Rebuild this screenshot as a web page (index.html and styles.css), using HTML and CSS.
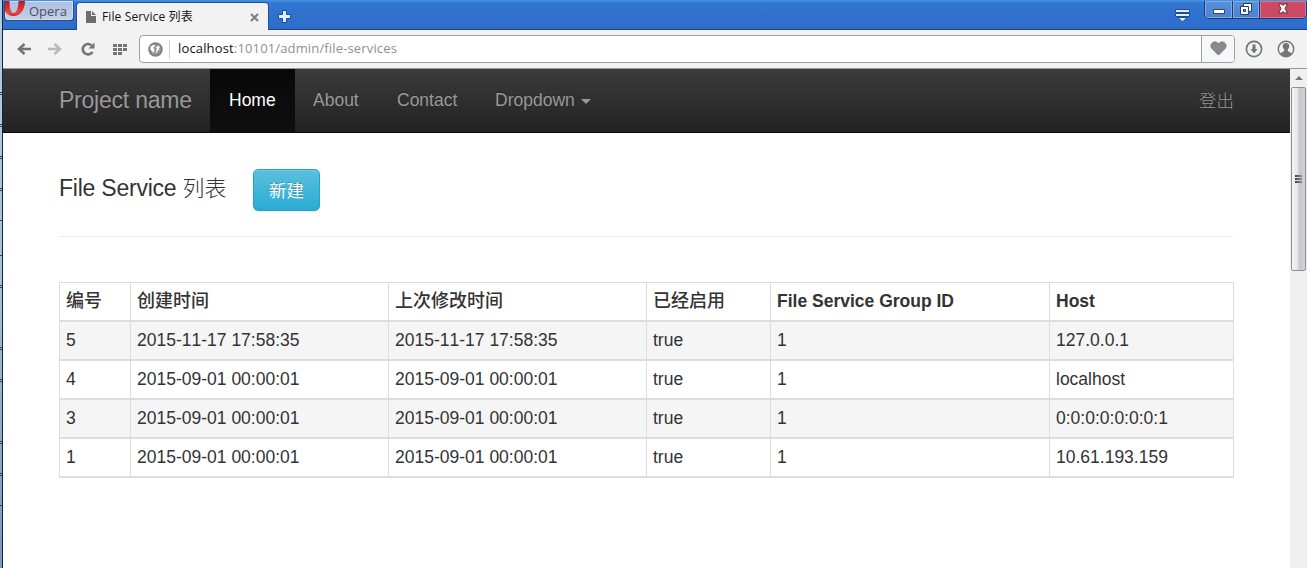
FILE: index.html
```
<!DOCTYPE html>
<html lang="zh-CN">
<head>
<meta charset="utf-8">
<title>File Service 列表</title>
<link rel="stylesheet" href="styles.css">
</head>
<body>
<div class="desktop-edge"><i></i><i></i><i></i><i></i><i class="line"></i><i class="line late"></i><i></i><i class="long"></i><i></i><i class="long"></i><i></i><i class="line"></i></div>
<div class="window">
  <div class="titlebar">
    <div class="opera-button">
      <svg class="opera-logo" width="22" height="18" viewBox="0 0 22 18"><defs><linearGradient id="og" x1="0" y1="0" x2="0" y2="1"><stop offset="0" stop-color="#b81c20"/><stop offset=".8" stop-color="#ef4545"/><stop offset="1" stop-color="#d02020"/></linearGradient></defs><path fill="url(#og)" fill-rule="evenodd" d="M-1 0H22C22 9 17 15 10.500 15C4 15 -1 9 -1 0ZM6.500 0C6.500 8 8 12 10.500 12C13.500 12 15.500 7 15.500 0Z"/></svg>
      <span>Opera</span>
    </div>
    <div class="tab">
      <svg width="12" height="12" viewBox="0 0 12 12"><path fill="#6c6f70" d="M1 0H6V5H11V12H1ZM7 0L11 4H7Z"/></svg>
      <span class="tab-title">File Service 列表</span>
      <svg class="tab-close" width="9" height="9" viewBox="0 0 9 9"><path d="M1 1L8 8M8 1L1 8" stroke="#808080" stroke-width="2.200"/></svg>
    </div>
    <svg class="new-tab" width="13" height="13" viewBox="0 0 13 13"><path d="M4.500 .5H8.500V4.500H12.500V8.500H8.500V12.500H4.500V8.500H.5V4.500H4.500Z" fill="#dff0ff" stroke="#1b4f98"/></svg>
    <svg class="tab-menu" width="15" height="14" viewBox="0 0 15 14"><path d="M.5 .5H14.500V3.500H.5ZM.5 4.500H14.500V7.500H.5ZM3 8.500H12L7.500 13Z" fill="#e3efff" stroke="#1c4e98"/></svg>
    <div class="controls">
      <span class="control minimize"><svg width="12" height="5" viewBox="0 0 12 5"><path d="M.5 .5H11.500V4.500H.5Z" fill="#fff" stroke="#2b4674"/></svg></span>
      <span class="control restore"><svg width="12" height="12" viewBox="0 0 12 12"><path d="M3.500 .5H11.500V8.500H8.500V11.500H.5V3.500H3.500Z" fill="#fff" stroke="#26406c"/><path d="M3.500 3.500H8.500V8.500" fill="none" stroke="#26406c"/><path d="M3.500 6.500H5.500V8.500H3.500Z" fill="#5386d5" stroke="#26406c"/></svg></span>
      <span class="control close"><svg width="12" height="11" viewBox="0 0 12 11"><path d="M1.500 1H5L6 2.500L7 1H10.500L8 5.500L10.500 10H7L6 8.500L5 10H1.500L4 5.500Z" fill="#fff" stroke="#6d2537"/></svg></span>
    </div>
  </div>
  <div class="toolbar">
    <svg class="back" width="15" height="12" viewBox="0 0 15 12"><path d="M7.500 1L2 6L7.500 11M2.500 6H14" fill="none" stroke="#717577" stroke-width="2.500"/></svg>
    <svg class="forward" width="15" height="12" viewBox="0 0 15 12"><path d="M7.500 1L13 6L7.500 11M12.500 6H1" fill="none" stroke="#b9b9b9" stroke-width="2.500"/></svg>
    <svg class="reload" width="14" height="14" viewBox="0 0 14 14"><path d="M11.500 9.800A5.200 5.200 0 1 1 10.500 3.300" fill="none" stroke="#717577" stroke-width="2.600"/><path d="M13.500 .5V6.500H7.500Z" fill="#717577"/></svg>
    <svg class="speed-dial" width="15" height="11" viewBox="0 0 15 11"><path fill="#717577" d="M0 0H4V3H0ZM5 0H9V3H5ZM10 0H14V3H10ZM0 4H4V7H0ZM5 4H9V7H5ZM10 4H14V7H10ZM0 8H4V11H0ZM5 8H9V11H5Z"/></svg>
    <div class="address">
      <svg class="globe" width="15" height="15" viewBox="0 0 15 15"><circle cx="7.500" cy="7.500" r="6.300" fill="#989898" stroke="#808080" stroke-width="1.900"/><path fill="#fff" d="M2.500 4.500L6 2.500L7 4L5 6L6.500 7L5.500 11L3.500 8.500L2.300 7ZM8 5L11 3.500L12 5.500L10.500 6L11.500 8L10 8L8.500 11.500L8 9L9 7Z"/></svg>
      <span class="url"><b>localhost</b>:10101/admin/file-services</span>
      <span class="heart"><svg width="17" height="15" viewBox="0 0 17 15"><path fill="#888b8d" stroke="#737678" d="M8.500 14L2 7.500C-1.500 3.500 4.500 -2 8.500 2.800C12.500 -2 18.500 3.500 15 7.500Z"/></svg></span>
    </div>
    <svg class="download" width="18" height="18" viewBox="0 0 18 18"><circle cx="9" cy="9" r="7.600" fill="none" stroke="#717577" stroke-width="1.600"/><path fill="#717577" d="M7.500 4.500H10.500V9H12.500L9 13.500L5.500 9H7.500Z"/></svg>
    <svg class="account" width="18" height="18" viewBox="0 0 18 18"><circle cx="9" cy="9" r="7.700" fill="none" stroke="#717577" stroke-width="1.400"/><path fill="#717577" d="M9 3C13.300 3 12.800 7.500 10.800 9.500V11L15 13.500Q9 20 3 13.500L7.200 11V9.500C5.200 7.500 4.700 3 9 3Z"/></svg>
  </div>
  <div class="viewport">
    <div class="page">
      <nav class="navbar">
        <a class="brand">Project name</a>
        <a class="nav-item active">Home</a>
        <a class="nav-item about">About</a>
        <a class="nav-item contact">Contact</a>
        <a class="nav-item dropdown">Dropdown<i class="caret"></i></a>
        <a class="nav-item logout">登出</a>
      </nav>
      <main class="content">
        <header class="page-header"><h1>File Service <span class="cjk">列表</span></h1><button class="create">新建</button></header>
        <table class="services">
          <colgroup><col class="c-id"><col class="c-time"><col class="c-time"><col class="c-enabled"><col class="c-group"><col class="c-host"></colgroup>
          <thead><tr><th class="cjk">编号</th><th class="cjk">创建时间</th><th class="cjk">上次修改时间</th><th class="cjk">已经启用</th><th>File Service Group ID</th><th>Host</th></tr></thead>
          <tbody>
            <tr><td>5</td><td>2015-11-17 17:58:35</td><td>2015-11-17 17:58:35</td><td>true</td><td>1</td><td>127.0.0.1</td></tr>
            <tr><td>4</td><td>2015-09-01 00:00:01</td><td>2015-09-01 00:00:01</td><td>true</td><td>1</td><td>localhost</td></tr>
            <tr><td>3</td><td>2015-09-01 00:00:01</td><td>2015-09-01 00:00:01</td><td>true</td><td>1</td><td>0:0:0:0:0:0:0:1</td></tr>
            <tr><td>1</td><td>2015-09-01 00:00:01</td><td>2015-09-01 00:00:01</td><td>true</td><td>1</td><td>10.61.193.159</td></tr>
          </tbody>
        </table>
      </main>
    </div>
    <div class="scrollbar">
      <svg class="scroll-up" width="8" height="4" viewBox="0 0 8 4"><path d="M0 4L4 0L8 4Z" fill="#777"/></svg>
      <div class="thumb"><i></i><i></i><i></i></div>
    </div>
  </div>
</div>
</body>
</html>
```
FILE: styles.css
```
* { box-sizing: border-box; }
html, body { height: 100%; }
body { margin: 0; display: flex; overflow: hidden; background: #fff; font-family: "Liberation Sans", "Noto Sans CJK SC", sans-serif; font-kerning: none; }
svg { display: block; flex: none; }

.desktop-edge { width: 3px; flex: none; display: flex; flex-direction: column; background: linear-gradient(#b6cce4, #a8bfd9 50%, #7e97b8); border-right: 1px solid #172138; padding-top: 92px; }
.desktop-edge i { height: 3px; margin-bottom: 29px; border: solid #34435c; border-width: 1px 0; flex: none; }
.desktop-edge .line { height: 1px; margin-bottom: 34px; border-bottom: 0; }
.desktop-edge .late { margin-bottom: 29px; }
.desktop-edge .long { margin-bottom: 29px; }
.desktop-edge i:nth-child(7), .desktop-edge i:nth-child(9) { margin-bottom: 59px; }

.window { flex: 1; min-width: 0; display: flex; flex-direction: column; }
.titlebar { height: 30px; flex: none; display: flex; align-items: flex-start; background: linear-gradient(#3d88da 0, #3275d3 3px, #2d6ccb 100%); border-top: 1px solid #3f93df; border-bottom: 1px solid #174583; }
.opera-button { width: 70px; height: 20px; margin-left: 1px; display: flex; background: linear-gradient(#aabfe0, #c7cfe4); border: 1px solid #2b4b7d; border-top: 0; border-radius: 0 0 4px 4px; box-shadow: inset 0 0 0 1px #d4dff0; font: 13px/20px "Open Sans", sans-serif; color: #4a5062; overflow: hidden; }
.opera-logo { margin-left: -2px; }
.opera-button span { margin-left: 4px; }
.tab { width: 193px; height: 29px; margin: 1px 0 0 2px; padding: 0 9px 0 8px; display: flex; align-items: center; background: #f2f2f2; border: 1px solid #1e50a0; border-bottom: 0; border-radius: 4px 4px 0 0; }
.tab-title { margin-left: 5px; flex: 1; white-space: nowrap; font: 12px/20px "Open Sans", "Noto Sans CJK SC", sans-serif; letter-spacing: .12px; color: #161616; }
.new-tab { margin: 9px 0 0 9px; }
.tab-menu { margin: 8px 14px 0 auto; }
.controls { display: flex; height: 18px; border: 1px solid #1c3a70; border-top: 0; border-radius: 0 0 5px 5px; overflow: hidden; }
.control { display: flex; align-items: center; justify-content: center; width: 28px; background: linear-gradient(#5b90da, #4a82d2); box-shadow: inset 0 0 0 1px #82abe3; border-right: 1px solid #1c3a70; }
.minimize { padding-top: 4px; }
.restore { width: 27px; padding-bottom: 1px; }
.close { width: 46px; padding-bottom: 2px; border: 0; background: linear-gradient(#cf4b62, #c84a62); box-shadow: inset 0 0 0 1px #d3778e; }

.toolbar { height: 39px; flex: none; display: flex; align-items: center; background: #f2f2f2; border-bottom: 1px solid #999; padding-left: 14px; }
.forward { margin-left: 15px; }
.reload { margin-left: 19px; }
.speed-dial { margin-left: 18px; }
.address { display: flex; align-items: center; width: 1096px; height: 28px; margin-left: 11px; background: #fff; border: 1px solid #a0a0a0; border-radius: 4px; overflow: hidden; }
.globe { margin-left: 8px; }
.url { height: 19px; margin-left: 6px; padding-left: 8px; border-left: 1px solid #d0d0d0; flex: 1; font: 13px/17px "Open Sans", sans-serif; letter-spacing: .15px; color: #8f8f8f; }
.url b { font-weight: 400; color: #111; }
.heart { width: 33px; height: 100%; display: flex; align-items: center; justify-content: center; background: #f5f7f9; border-left: 1px solid #a0a0a0; }
.heart svg { margin-bottom: 2px; }
.download { margin-left: 10px; }
.account { margin-left: 14px; }

.viewport { flex: 1; display: flex; min-height: 0; }
.page { width: 1287px; flex: none; background: #fff; }
.navbar { height: 64px; padding: 0 56px; display: flex; background: linear-gradient(#3c3c3c, #222); border-bottom: 1px solid #080808; color: #999; font-size: 17.5px; line-height: 62px; text-shadow: 0 -1px 0 rgba(0, 0, 0, .25); white-space: nowrap; }
.brand { width: 151px; font-size: 23px; letter-spacing: -.23px; }
.nav-item.active { width: 85px; padding-left: 19px; color: #fff; background: linear-gradient(#080808, #0f0f0f); }
.about { margin-left: 18px; width: 84px; }
.contact { width: 98px; }
.dropdown { display: flex; align-items: center; height: 62px; }
.caret { margin: 3px 0 0 6px; border: 5px solid transparent; border-top-color: #999; border-bottom: 0; }
.logout { margin-left: auto; line-height: 61px; font-family: "Noto Sans CJK SC", sans-serif; font-weight: 300; }

.content { padding: 36px 57px 0 56px; color: #333; }
.page-header { height: 68px; display: flex; align-items: flex-start; border-bottom: 1px solid #eee; }
h1 { width: 194px; margin: 0; font-size: 23px; letter-spacing: -.23px; font-weight: 400; line-height: 38px; white-space: nowrap; }
h1 .cjk { font-size: 22px; font-weight: 300; letter-spacing: 0; }
.create { width: 67px; height: 42px; padding: 0; border: 1px solid #28a1c5; border-radius: 5px; background: linear-gradient(#5bc0de, #2aabd2); box-shadow: inset 0 1px 0 rgba(255, 255, 255, .15), 0 1px 1px rgba(0, 0, 0, .075); color: #fff; font: 17.5px/38px "Noto Sans CJK SC", sans-serif; text-shadow: 0 -1px 0 rgba(0, 0, 0, .2); }
.services { width: 1175px; margin-top: 45px; table-layout: fixed; border-collapse: separate; border-spacing: 0; border-top: 1px solid #ddd; border-right: 1px solid #ddd; font-size: 17.5px; line-height: 25px; white-space: nowrap; }
.services th, .services td { height: 39px; padding: 0 6px; border-left: 1px solid #ddd; border-bottom: 2px solid #ddd; text-align: left; }
.services th.cjk { font-size: 18px; font-weight: 500; }
.services tbody tr:nth-child(odd) { background: #f5f5f5; }
.c-id { width: 71px; }
.c-time { width: 258px; }
.c-enabled { width: 124px; }
.c-group { width: 279px; }

.scrollbar { flex: 1; display: flex; flex-direction: column; align-items: center; background: #f0f0f0; }
.scroll-up { margin-top: 7px; }
.thumb { width: 15px; height: 184px; margin-top: 7px; display: flex; flex-direction: column; align-items: center; justify-content: center; gap: 1px; background: linear-gradient(90deg, #f5f5f5, #e3e4e6 45%, #c5c7cd 55%, #d2d2d7); border: 1px solid #8f9092; border-radius: 2px; }
.thumb i { width: 7px; height: 2px; background: linear-gradient(90deg, #404040, #929292); }
```
